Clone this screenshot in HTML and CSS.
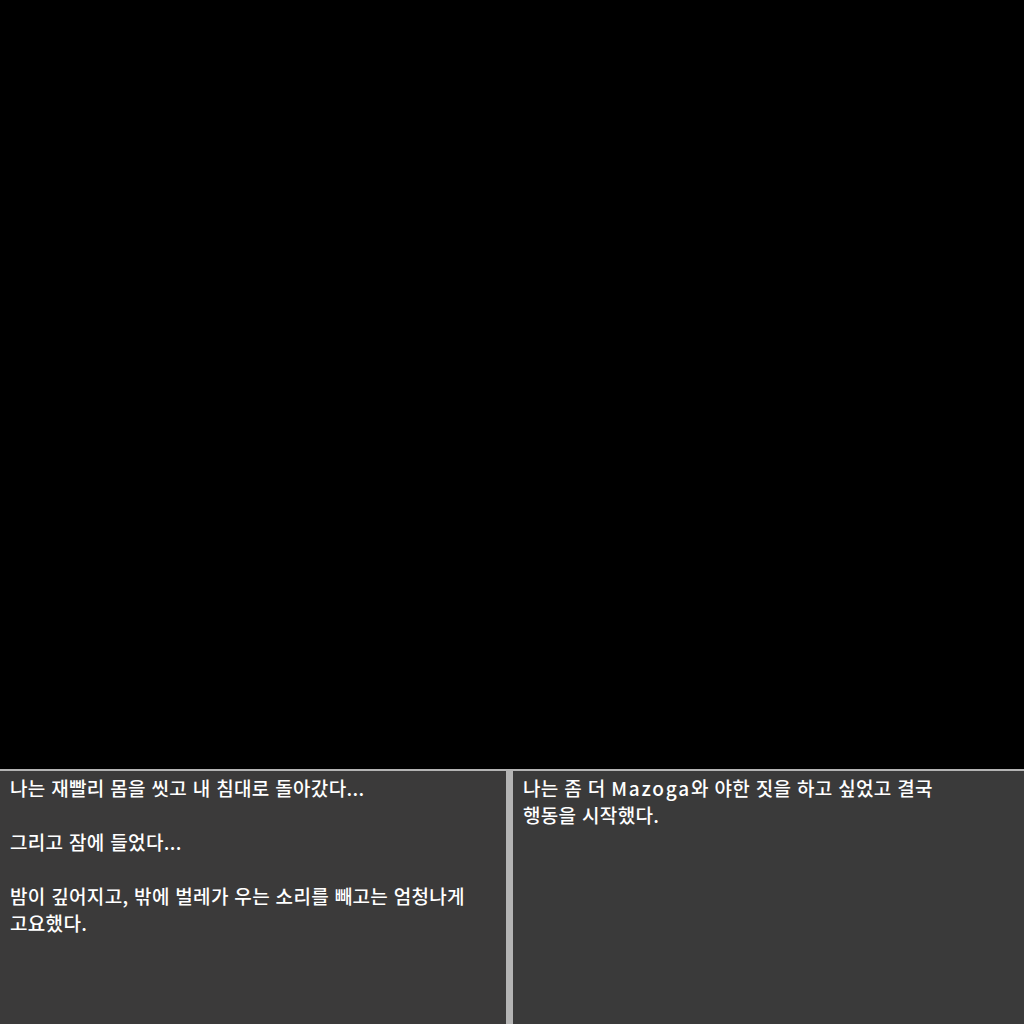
FILE: index.html
```html
<!DOCTYPE html>
<html lang="ko">
<head>
<meta charset="utf-8">
<link rel="stylesheet" href="styles.css">
</head>
<body>
<div class="screen">
  <div class="scene"></div>
  <div class="dialog">
    <div class="panel panel-left">
      <p>나는 재빨리 몸을 씻고 내 침대로 돌아갔다...</p>
      <p>그리고 잠에 들었다...</p>
      <p>밤이 깊어지고, 밖에 벌레가 우는 소리를 빼고는 엄청나게<br>고요했다.</p>
    </div>
    <div class="divider"></div>
    <div class="panel panel-right">
      <p>나는 좀 더 <span class="latin">Mazoga</span>와 야한 짓을 하고 싶었고 결국<br>행동을 시작했다.</p>
    </div>
  </div>
</div>
</body>
</html>
```

FILE: styles.css
```css
html, body {
  margin: 0;
  padding: 0;
  background: #000;
}
.screen {
  width: 1024px;
  height: 1024px;
  display: flex;
  flex-direction: column;
}
.scene {
  height: 769px;
  background: #000;
}
.dialog {
  flex: 1;
  display: flex;
  border-top: 2px solid #b4b4b4;
}
.panel {
  background: #3b3a3a;
  padding: 3px 10px;
  color: #fff;
  font-family: "Noto Sans CJK KR", "Noto Sans", sans-serif;
  font-size: 19px;
  font-weight: 500;
  line-height: 27px;
  letter-spacing: 0.32px;
}
.panel-left {
  width: 486px;
}
.panel-right {
  flex: 1;
  background: #3a3a3a;
}
.divider {
  width: 7px;
  background: #b4b4b4;
}
.panel p {
  margin: 0 0 27px 0;
  white-space: nowrap;
}
.latin {
  letter-spacing: 1.8px;
}
```
